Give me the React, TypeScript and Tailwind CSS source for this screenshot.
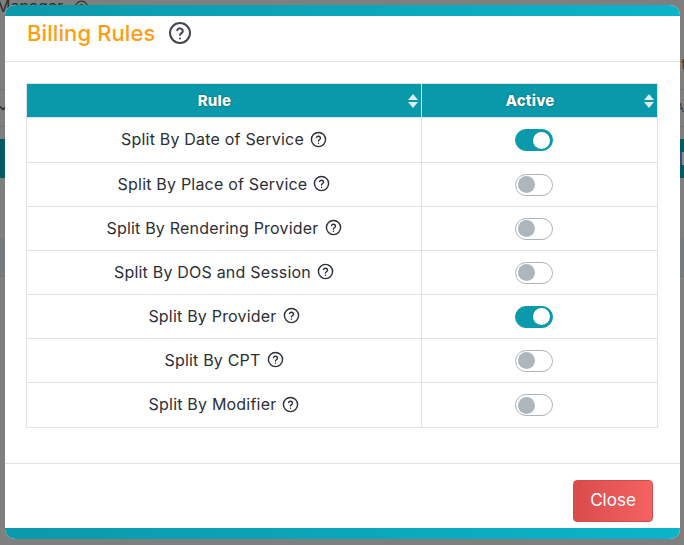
import { useState } from "react";

const rules = [
  { name: "Split By Date of Service", active: true },
  { name: "Split By Place of Service", active: false },
  { name: "Split By Rendering Provider", active: false },
  { name: "Split By DOS and Session", active: false },
  { name: "Split By Provider", active: true },
  { name: "Split By CPT", active: false },
  { name: "Split By Modifier", active: false },
];

function HelpIcon({ size, stroke = "#2b2f36", width = 2 }: { size: number; stroke?: string; width?: number }) {
  return (
    <svg width={size} height={size} viewBox="0 0 24 24" fill="none" stroke={stroke} strokeWidth={width} strokeLinecap="round" strokeLinejoin="round" className="shrink-0">
      <circle cx="12" cy="12" r="10" />
      <path d="M9.2 9.2a2.9 2.9 0 0 1 5.6 1c0 1.9-2.8 2.4-2.8 3.8" />
      <path d="M12 17.4h.01" />
    </svg>
  );
}

function SortArrows() {
  return (
    <span className="absolute right-[3px] top-[10px] flex flex-col gap-[2px]">
      <span className="h-0 w-0 border-x-[5px] border-b-[6px] border-x-transparent border-b-[#dcecef]" />
      <span className="h-0 w-0 border-x-[5px] border-t-[6px] border-x-transparent border-t-[#dcecef]" />
    </span>
  );
}

function Toggle({ on }: { on: boolean }) {
  const [checked, setChecked] = useState(on);
  return (
    <button
      onClick={() => setChecked(!checked)}
      className={
        "ml-[93px] flex h-[22px] w-[38px] items-center rounded-full border px-[2px] " +
        (checked ? "justify-end border-[#0a9aab] bg-[#0a9aab]" : "justify-start border-[#adb5bd] bg-white")
      }
    >
      <span className={"h-[17px] w-[17px] rounded-full " + (checked ? "bg-white" : "bg-[#adb5bd]")} />
    </button>
  );
}

export default function App() {
  return (
    <div className="relative h-[545px] w-[684px] overflow-hidden bg-[#7f7f7f] font-['Inter',sans-serif]">
      {/* page behind the overlay */}
      <div className="flex h-[90px] items-start justify-between border-b border-[#737373] pr-0">
        <div className="-ml-[4px] flex items-start gap-[11px] text-[16px] leading-[12px] text-[#2e2e2e]">
          <span>Manager</span>
          <HelpIcon size={15} stroke="#333333" />
        </div>
        <span className="-mr-[3px] mt-[57px] text-[15px] font-bold leading-[16px] text-[#5a3a10]">t</span>
      </div>
      <div className="flex h-[37px] items-center justify-between border-b border-[#737373] text-[#2e2e2e]">
        <svg width="6" height="6" viewBox="0 0 6 6" fill="none" stroke="#333333" strokeWidth="1.6">
          <path d="M0 1.5 3 4.5 6 1.5" />
        </svg>
        <span className="text-[12px] leading-[12px] text-[#33373f]">A</span>
      </div>
      <div className="h-[12px]" />
      <div className="flex h-[39px] items-center justify-end bg-[#045a62]">
        <span className="h-[13px] w-[4px] border-l-2 border-[#2f4d8a] bg-[#8c8c80]" />
      </div>
      <div className="h-[60px]" />
      <div className="h-[39px] border-b border-[#737373] bg-[#767c7d]" />

      {/* modal */}
      <div className="absolute left-[5px] top-[5px] flex h-[534px] w-[675px] flex-col overflow-hidden rounded-[10px] bg-white">
        <div className="h-[11px] shrink-0 bg-gradient-to-r from-[#0a99aa] to-[#0bb4c9]" />
        <div className="flex h-[46px] shrink-0 items-start gap-[13px] border-b border-[#e3e3e3] pl-[22px]">
          <h2 className="text-[22px] font-medium leading-[34px] tracking-[0.1px] text-[#ff9d14]">Billing Rules</h2>
          <span className="mt-[5px]">
            <HelpIcon size={24} stroke="#43464f" />
          </span>
        </div>
        <div className="h-[401px] shrink-0 pl-[21px] pt-[21px]">
          <table className="w-[632px] table-fixed border-collapse border border-[#dee2e6] text-center">
            <thead>
              <tr className="h-[34px] bg-[#0a99aa] text-[15px] font-extrabold tracking-[0.2px] text-white [text-shadow:0_0_2px_rgba(0,0,0,0.45)]">
                <th className="relative w-[395px] p-0 pr-[19px] pt-[1px] font-extrabold">
                  Rule
                  <SortArrows />
                </th>
                <th className="relative border-l border-[#e9f3f5] p-0 pr-[19px] pt-[1px] font-extrabold">
                  Active
                  <SortArrows />
                </th>
              </tr>
            </thead>
            <tbody>
              {rules.map((rule) => (
                <tr key={rule.name} className="h-[44px] border-t border-[#dee2e6] first:h-[45px] last:h-[45px]">
                  <td className="p-0 pb-[2px]">
                    <div className="flex items-center justify-center gap-[6px] text-[16px] tracking-[0.2px] text-[#2b2f36]">
                      <span>{rule.name}</span>
                      <HelpIcon size={17} />
                    </div>
                  </td>
                  <td className="border-l border-[#dee2e6] p-0">
                    <Toggle on={rule.active} />
                  </td>
                </tr>
              ))}
            </tbody>
          </table>
        </div>
        <div className="flex flex-1 items-start justify-end border-t border-[#e3e3e3] pr-[27px] pt-[16px]">
          <button className="h-[42px] w-[80px] rounded-[4px] border border-[#d44b4b] bg-gradient-to-r from-[#d94c4c] to-[#f56262] text-[17px] text-white">
            Close
          </button>
        </div>
        <div className="h-[11px] shrink-0 bg-gradient-to-r from-[#0a99aa] to-[#0bb4c9]" />
      </div>
    </div>
  );
}
